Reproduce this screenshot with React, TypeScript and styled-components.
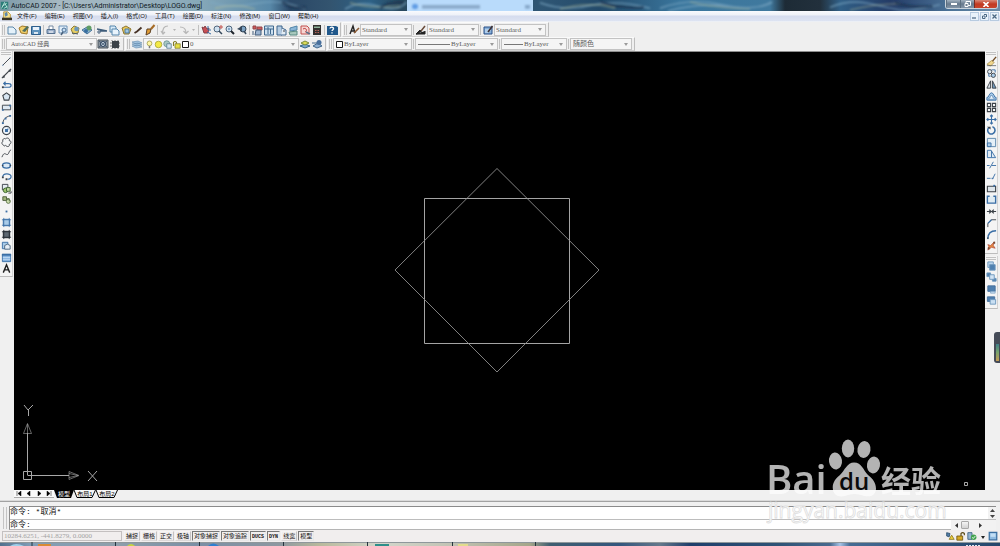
import React from "react";
import styled, { createGlobalStyle } from "styled-components";

const sans = '"Liberation Sans", "Noto Sans CJK SC", sans-serif';
const serif = '"Liberation Serif", "Noto Sans CJK SC", serif';
const mono = '"Liberation Mono", "Noto Sans CJK SC", monospace';

const GlobalStyle = createGlobalStyle`
  * { box-sizing: border-box; }
  body { margin: 0; background: #f0f0f0; font-family: ${sans}; font-size: 6px; color: #111; }
  button, select, input { font: inherit; color: inherit; margin: 0; padding: 0; border: 0; background: none; border-radius: 0; }
  svg { display: block; flex: none; }
`;

const Shell = styled.div`
  position: relative;
  display: flex;
  flex-direction: column;
  min-height: 100vh;
  overflow: hidden;
`;

/* ---------- title bar ---------- */
const TitleBar = styled.header`
  position: relative;
  display: flex;
  align-items: center;
  height: 11px;
  gap: 2px;
  overflow: hidden;
  background: #31597c;
`;
const Backdrop = styled.svg`
  position: absolute;
  inset: 0;
  width: 100%;
  height: 100%;
`;
const TitleText = styled.h1`
  position: relative;
  flex: 1;
  margin: 0;
  font-family: Roboto, "Noto Sans CJK SC", sans-serif;
  font-size: 7px;
  line-height: 10px;
  font-weight: 400;
  color: #10181e;
`;
const TitleIcon = styled.span`
  position: relative;
`;
const WindowButtons = styled.div`
  position: relative;
  align-self: flex-start;
  display: flex;
  height: 9px;
  margin-right: 2px;
  border: 1px solid #c9d3dc;
  border-top: 0;
  border-radius: 0 0 3px 3px;
  overflow: hidden;
`;
const WindowButton = styled.button<{ $close?: boolean }>`
  display: grid;
  place-items: center;
  width: ${(p) => (p.$close ? 23 : 14)}px;
  border-left: 1px solid ${(p) => (p.$close ? "#7a2c20" : "#5d6f80")};
  background: ${(p) =>
    p.$close
      ? "linear-gradient(#d98a78, #c23a22 50%, #c9452b)"
      : "linear-gradient(#a3b2c0, #66798d 50%, #8596a8)"};
`;

/* ---------- menu ---------- */
const MenuBar = styled.nav`
  display: flex;
  align-items: center;
  height: 11px;
  padding: 0 1px 0 2px;
  background: linear-gradient(#f8fafd, #eef1f8 40%, #d5dcee 50%, #dde3f2);
  border-bottom: 1px solid #eceff5;
`;
const MenuList = styled.div`
  display: flex;
  flex: 1;
  gap: 8px;
  margin-left: 5px;
`;
const MenuItem = styled.button`
  font-size: 6px;
  line-height: 9px;
  white-space: nowrap;
`;
const MdiButtons = styled.div`
  display: flex;
  gap: 1px;
`;
const MdiButton = styled.button`
  display: grid;
  place-items: center;
  width: 9px;
  height: 9px;
  border: 1px solid #b8cbe0;
  background: #e8f1fa;
`;

/* ---------- toolbars ---------- */
const ToolbarRow = styled.div<{ $h: number }>`
  display: flex;
  gap: 1px;
  height: ${(p) => p.$h}px;
  background: #efefef;
`;
const Toolbar = styled.div`
  display: flex;
  align-items: center;
  padding-right: 2px;
  border: 1px solid #fafafa;
  border-right-color: #bdbdbd;
  border-bottom-color: #cfcfcf;
`;
const Grip = styled.span`
  width: 3px;
  height: 10px;
  margin: 0 1px;
  border: 1px solid #c2c2c2;
  border-width: 0 1px;
`;
const ToolButton = styled.button<{ $narrow?: boolean }>`
  display: grid;
  place-items: center;
  width: ${(p) => (p.$narrow ? 7 : 12)}px;
  height: 12px;
`;
const Separator = styled.span`
  width: 1px;
  height: 10px;
  margin: 0 1px;
  background: #c0c0c0;
`;
const Combo = styled.span<{ $w: number; $size?: number; $inset?: number }>`
  display: flex;
  align-items: center;
  width: ${(p) => p.$w}px;
  height: 12px;
  padding: 0 3px 0 ${(p) => p.$inset ?? 1}px;
  border: 1px solid #c3c3c3;
  background: #f5f5f5;
  font-family: ${serif};
  font-size: ${(p) => p.$size ?? 7}px;
  color: #5c5c5c;
`;
const Select = styled.select`
  flex: 1;
  min-width: 0;
  height: 10px;
  line-height: 10px;
  appearance: none;
  outline: 0;
`;

/* ---------- workspace ---------- */
const Workspace = styled.main`
  display: flex;
  flex: 1;
`;
const SideColumn = styled.aside<{ $w: number }>`
  display: flex;
  flex-direction: column;
  gap: 2px;
  flex: none;
  width: ${(p) => p.$w}px;
  background: #f0f0f0;
`;
const SideBar = styled.div`
  display: flex;
  flex-direction: column;
  align-items: center;
  width: 13px;
  padding-bottom: 2px;
  border-right: 1px solid #d2d2d2;
  border-bottom: 1px solid #bcbcbc;
  background: #f4f4f4;
`;
const SideGrip = styled.span`
  width: 10px;
  height: 3px;
  margin: 1px 0;
  border: 1px solid #c2c2c2;
  border-width: 1px 0;
`;
const SideTools = styled.div<{ $h: number }>`
  display: flex;
  flex-direction: column;
  justify-content: space-between;
  height: ${(p) => p.$h}px;
`;
const SideTool = styled.button`
  display: grid;
  place-items: center;
  width: 11px;
  height: 11px;
`;
const Canvas = styled.section`
  display: grid;
  flex: 1;
  min-width: 0;
  background: #000;
  border-top: 1px solid #8d8d8d;
  > svg { grid-area: 1 / 1; }
`;
const Drawing = styled.svg`
  place-self: center;
`;
const UcsIcon = styled.svg`
  place-self: end start;
`;
const CornerMark = styled.svg`
  place-self: end;
`;
const EdgeWidget = styled.span`
  position: absolute;
  right: 0;
  top: 332px;
  width: 6px;
  height: 31px;
  padding: 12px 1px 2px 2px;
  border-radius: 3px 0 0 3px;
  background: #454b57;
`;
const EdgeMeter = styled.span`
  display: block;
  height: 100%;
  background: linear-gradient(#3f7f88, #79a36c 50%, #c49a55);
`;

/* ---------- layout tabs ---------- */
const TabRow = styled.div`
  display: flex;
  align-items: flex-start;
  height: 11px;
  padding-left: 14px;
  background: #f0f0f0;
  border-bottom: 1px solid #dadada;
`;
const TabNav = styled.div`
  display: flex;
  width: 40px;
  height: 8px;
  background: #fafafa;
  border-bottom: 1px solid #aaa;
`;
const TabNavButton = styled.button`
  display: grid;
  place-items: center;
  flex: 1;
`;
const Tab = styled.button<{ $active?: boolean; $w: number }>`
  position: relative;
  display: grid;
  place-items: center;
  width: ${(p) => p.$w}px;
  height: 8px;
  line-height: 7px;
  color: ${(p) => (p.$active ? "#fff" : "#000")};
  > svg { position: absolute; inset: 0; width: 100%; height: 100%; }
  > span { position: relative; }
`;

/* ---------- command line ---------- */
const CommandPanel = styled.section`
  display: flex;
  height: 29px;
  padding: 4px 4px 0 2px;
  border-top: 1px solid #a2a2a2;
  background: #f0f0f0;
`;
const CommandGrip = styled.span`
  width: 4px;
  margin: 1px 2px 1px 1px;
  border: 1px solid #c4c4c4;
  border-width: 0 1px;
`;
const CommandBody = styled.div`
  flex: 1;
  border: 1px solid #8b8b8b;
  border-right: 0;
  border-bottom-color: #b5b5b5;
  background: #fff;
  font-family: ${mono};
  font-size: 8px;
  line-height: 10px;
`;
const CommandLine = styled.div`
  display: flex;
  height: 13px;
  border-bottom: 1px solid #bdbdbd;
`;
const CommandPrompt = styled.label`
  display: flex;
  height: 10px;
`;
const CommandInput = styled.input`
  flex: 1;
  min-width: 0;
  height: 10px;
  outline: 0;
`;
const ScrollV = styled.span`
  display: flex;
  flex-direction: column;
  justify-content: space-around;
  align-items: center;
  width: 8px;
  margin-left: auto;
  background: #f2f2f2;
`;
const ScrollH = styled.span`
  display: flex;
  align-items: center;
  justify-content: space-between;
  width: 45px;
  padding: 0 14px 0 4px;
  background: #f2f2f2;
`;
const ScrollThumb = styled.span`
  width: 8px;
  height: 8px;
  margin-right: 8px;
  border: 1px solid #a8a8a8;
  border-radius: 1px;
  background: linear-gradient(#f4f4f4, #d2d2d2);
`;

/* ---------- status bar ---------- */
const StatusBar = styled.footer`
  display: flex;
  align-items: center;
  height: 12px;
  padding: 0 2px;
  background: #f1eeee;
`;
const Coordinates = styled.output`
  width: 120px;
  height: 10px;
  margin-right: 2px;
  padding-left: 1px;
  border: 1px solid #c4c0c0;
  font-family: ${serif};
  font-size: 7px;
  line-height: 8px;
  white-space: nowrap;
  color: #a2a2a2;
`;
const StatusToggles = styled.div`
  display: flex;
  gap: 1px;
  flex: 1;
`;
const StatusToggle = styled.button<{ $on?: boolean }>`
  height: 10px;
  padding: 0 1px;
  border: 1px solid ${(p) => (p.$on ? "#777" : "#f6f4f4")};
  border-right-color: ${(p) => (p.$on ? "#e8e8e8" : "#c6c2c2")};
  border-bottom-color: ${(p) => (p.$on ? "#e8e8e8" : "#dcd8d8")};
  font-size: 6px;
  line-height: 8px;
  white-space: nowrap;
`;
const LatinLabel = styled.span`
  font-family: ${mono};
  font-size: 5px;
  font-weight: 700;
`;
const Tray = styled.div`
  display: flex;
  align-items: center;
  gap: 1px;
`;
const Taskbar = styled.div`
  height: 4px;
  > svg { width: 100%; height: 100%; }
`;

const Watermark = styled.svg`
  position: absolute;
  right: 52px;
  bottom: 18px;
  pointer-events: none;
`;

/* ---------- icons ---------- */
const B = "#3a6ea5";
const K = "#3c4248";
const L = "#a9cbe8";

const icons: Record<string, React.ReactNode> = {
  new: <path d="M2 3h5l3 3v4H2z" fill="#e4f1fa" stroke="#5b86a8" />,
  open: <><path d="M1 4l3-2 6 1-1 7-6-1z" fill="#f1cf6b" stroke="#a07a28" /><path d="M4 7l5-5 2 1-4 5z" fill="#4f6f5f" /></>,
  save: <><path d="M1.500 2.500h9v8h-9z" fill="#5f93bd" stroke="#2e5f8c" /><path d="M3 3h6v3H3z" fill="#e8f2fb" /><path d="M4 8h4v2H4z" fill="#dce8f2" /></>,
  print: <><path d="M4 5V2h4v3" fill="#fff" stroke="#7588a0" /><path d="M2 5.500h8v4H2z" fill="#9fb2cc" stroke="#55708e" /><path d="M4 8h4" stroke="#fff" /></>,
  preview: <><path d="M2 2h8v7H2z" fill="#e2effa" stroke="#6a90b5" /><circle cx="7" cy="6" r="2" fill="#c7def2" stroke="#4b6f95" /><path d="M6 8l-2 3" stroke="#49617c" strokeWidth="1.500" /></>,
  publish: <><path d="M2 5l3-3 5 2-1 5-5 1z" fill="#e8cf62" stroke="#8e7d36" /><circle cx="7.500" cy="5" r="2.300" fill="#6a98bd" /><path d="M3 9l6 1" stroke="#4c5b68" /></>,
  web: <><path d="M1 6l5-3 5 3-5 4z" fill="#8fb5d3" stroke="#47749a" /><circle cx="8" cy="4" r="2.500" fill="#5e9c64" /><circle cx="5" cy="7" r="2" fill="#386e9f" /></>,
  cut: <><path d="M1 5l10 2M4 7h7" stroke="#3e5c7a" strokeWidth="1.300" /><circle cx="3" cy="8" r="1.200" fill="none" stroke="#3e5c7a" /></>,
  copy: <><path d="M2 2h5l1 1v5H2z" fill="#d9ebf8" stroke="#5585ab" /><path d="M4 5h5l2 2v4H4z" fill="#e9f4fc" stroke="#5585ab" /></>,
  paste: <><path d="M2 4l4-2 5 3-2 5-5 0z" fill="#ecc957" stroke="#8c7633" /><path d="M5 5h4v4H5z" fill="#9ec6e3" stroke="#4c7ba2" /></>,
  match: <path d="M9.500 3.500L5 7.500 2.500 9" stroke="#473225" strokeWidth="1.800" />,
  brush: <><path d="M10.500 1L7 5" stroke="#a66b25" strokeWidth="2" /><path d="M3 5l4 0-1 4-4 2z" fill="#df9b35" stroke="#5e4123" /></>,
  undo: <path d="M9 2C5 2 3 5 4 10M2 7l2 3 2-2" stroke="#b6b6b6" strokeWidth="1.200" />,
  redo: <path d="M2 3c4 0 6 2 6 6M5.500 7L8 9.500 10.500 7" stroke="#b6b6b6" strokeWidth="1.200" />,
  drop: <path d="M2 5h3L3.500 7z" fill="#b4b4b4" />,
  pan: <><path d="M2 3l2 1 1-2 2 3 2-1-1 5-4 0z" fill="#c94f54" stroke="#843e44" /><path d="M8 2v4h3M7 8l4 2" stroke={B} /></>,
  zoom: <><circle cx="5" cy="5" r="3" fill="#cfe1f0" stroke="#51677d" /><path d="M7 7l3 3" stroke="#34475a" strokeWidth="1.500" /><path d="M9 1v4M7 3h4" stroke="#c25551" /></>,
  zoomWin: <><circle cx="5" cy="5" r="3" fill="#cfe1f0" stroke="#51677d" /><path d="M4 5h2" stroke={B} /><path d="M7 7l3 3" stroke="#1e242b" strokeWidth="2" /></>,
  zoomPrev: <><circle cx="7" cy="5" r="3" fill="#7ea3c4" stroke="#2f4254" /><path d="M8 7l2 3" stroke="#34475a" strokeWidth="1.500" /><path d="M1 5l5-3v5z" fill="#394a5c" /></>,
  properties: <><path d="M2 2h3v3H2zM6 3h5v3H6z" fill="#cf5a58" stroke="#92444a" /><path d="M2 7v4M5 6h5v5H4z" fill="#9bb3cf" stroke="#435c7b" /></>,
  center: <><path d="M1.500 2h9v9h-9z" fill="#cce0f0" stroke="#41698e" /><path d="M2 5h8M5 3v7M7.500 5v5" stroke="#41698e" /></>,
  palettes: <><path d="M2 2h5v9H2z" fill="#b4cce3" stroke="#3c648c" /><path d="M7 4l4 2v5H6" fill="#e3edf5" stroke="#3c648c" /><path d="M8 7h2" stroke={K} /></>,
  sheet: <><path d="M3 4l7-2v4l-7 1z" fill="#8ab7d8" stroke="#5285a9" /><path d="M2 8l8-1v4l-7 0z" fill="#a8c8bd" stroke="#598a82" /></>,
  markup: <><path d="M2 2h6l2 2v6H2z" fill="#f5d5d3" stroke="#c2504f" /><path d="M4 5c3-2 5 2 2 3" stroke="#bd3c3c" /><path d="M7 8l4 2" stroke="#5d6d85" strokeWidth="1.500" /></>,
  calc: <><path d="M2 1h8v10H2z" fill="#33302f" /><path d="M3 2.500h6V4H3z" fill="#8fb39b" /><path d="M4 6.500h4M4 8.500h4" stroke="#b66459" strokeDasharray="1 .5" /></>,
  help: <><path d="M1 2h9l2 1v8H1z" fill="#20588b" /><path d="M4 4.500C4 2.500 8 3 7.500 5 7 6 6 6 6 7M6 8.200v1.300" stroke="#fff" strokeWidth="1.300" /></>,
  textStyle: <><path d="M2 10l3-8 2 7M3 7h3" stroke="#242424" strokeWidth="1.400" /><path d="M11 4L6 9" stroke="#8b5b35" strokeWidth="1.600" /></>,
  dimStyle: <><path d="M10 2L6 7" stroke="#694a38" strokeWidth="1.500" /><path d="M1 10h9V7M1 10l4-4 2 3z" fill="#222" stroke="#222" /></>,
  tableStyle: <><path d="M2 3h8v7H2z" fill="#87b0da" stroke="#284f86" /><path d="M3 6h6M3 8h4" stroke="#dcecfb" /><path d="M10.500 2L6 8" stroke="#3c3032" strokeWidth="1.500" /></>,
  gear: <><path d="M1 2h10v8H1z" fill="#88929c" stroke="#4c565f" /><circle cx="6" cy="6" r="2.500" fill="#d2dfe9" stroke="#28405c" /><path d="M2 3l8 6M10 3L2 9" stroke="#28405c" strokeWidth=".7" /></>,
  workspace: <><path d="M3 3h7v7H3z" fill="#3c4248" /><path d="M3 2v1M6 2v1M9 2v1M3 10v1M6 10v1M9 10v1M1 5h2M10 5h1M1 8h2M10 8h1" stroke="#777" /></>,
  layers: <path d="M1 4l6-1 4 2-6 1zM1 6l6-1 4 2-6 1zM1 8l6-1 4 2-6 1z" fill="#a9c9e4" stroke="#5c86ab" strokeWidth=".6" />,
  bulb: <><circle cx="6" cy="4.500" r="3.200" fill="#fff6a4" stroke="#9b9540" /><path d="M5 8h2v3H5z" fill="#777" /></>,
  sun: <circle cx="6" cy="6" r="4.400" fill="#f3e945" stroke="#a39d2e" />,
  freeze: <><circle cx="5" cy="5" r="4" fill="#a8c8c3" stroke="#638a8b" /><path d="M5 5h6v6H5z" fill="#d3e3ef" stroke="#54788e" /></>,
  lock: <><path d="M2 8V3q2-2 4 0v2" stroke="#837c27" strokeWidth="1.400" /><path d="M4 5h7v6H4z" fill="#e6de43" stroke="#7d7829" /></>,
  swatch: <path d="M2 2h8v8H2z" fill="#fff" stroke="#111" strokeWidth="1.300" />,
  layerPrev: <><path d="M1 8l5-2 5 2-5 2z" fill="#79a7cf" stroke="#356489" /><path d="M2 5l4-2 4 2-4 2z" fill="#dcdb59" stroke="#7a8b3b" /></>,
  layerState: <><path d="M2 8l5-3 4 3-5 2z" fill="#8badd0" stroke="#42688d" /><circle cx="8" cy="4.500" r="2.500" fill="#486f9c" /><path d="M1 5h5" stroke="#42688d" /></>,
  line: <><path d="M2 10L10 2" stroke={K} /><path d="M1.500 9.500h1v1h-1zM9.500 1.500h1v1h-1z" fill={B} /></>,
  xline: <><path d="M1 11L11 1" stroke={K} strokeWidth="1.300" /><path d="M2 8.500h2v2H2zM8.500 2h2v2h-2z" fill={K} /></>,
  pline: <><path d="M2 9h6q3 0 3-2t-3-2H4M5 3L3 5l2 2" stroke={B} strokeWidth="1.300" /><path d="M1 8h2v2H1z" fill={K} /></>,
  polygon: <path d="M6 2l4 3-1.500 5h-5L2 5z" fill="#d8e6f2" stroke={K} strokeWidth="1.200" />,
  rect: <><path d="M1.500 3.500h9v5h-9z" fill="#dfe9f2" stroke={K} /><path d="M1 8h2v1.500H1zM9 3h2v2H9z" fill={B} /></>,
  arc: <><path d="M2 11C2 6 5 3 10 2" stroke={K} /><path d="M1 9h2v2H1zM4 4h2v2H4zM9 1h2v2H9z" fill={B} /></>,
  circle: <><circle cx="6" cy="6" r="4.400" fill="#edf4fa" stroke={K} strokeWidth="1.300" /><path d="M5 7l3-3M5 5h2v2H5z" stroke={B} strokeWidth="1.200" /></>,
  cloud: <path d="M3 9C0 8 1 5 2 5 1 2 4 1 5 2c2-2 5 0 4 2 3 0 2 4 0 4 1 3-3 3-4 1-1 1-2 1-2 0z" fill="#f4f6f7" stroke={K} />,
  spline: <path d="M1 10c2-5 3-4 5-3 3 1 2-4 5-5" stroke={K} />,
  ellipse: <><ellipse cx="6" cy="6" rx="4.300" ry="2.800" fill="#d9e8f5" stroke={B} strokeWidth="1.500" /><path d="M1 5.500h1.500v1H1zM9.500 5.500H11v1H9.500z" fill={K} /></>,
  ellipseArc: <><path d="M2 7c-1-5 9-5 9-1 0 2-2 3-4 3" stroke={B} strokeWidth="1.300" /><path d="M1 6h2v2H1zM5 8h2v2H5z" fill={K} /></>,
  insert: <><path d="M1.500 1.500h6v6h-6z" fill="#e5ecf2" stroke={K} /><circle cx="5" cy="8" r="2.500" fill="#9bc46c" stroke="#3d6232" /><path d="M6 5h4v4H6z" fill="#c4dda3" stroke="#3d6232" /><path d="M8 11h3V9" stroke={K} /></>,
  block: <><path d="M2 3h4v4H2z" fill="#a2b77f" stroke="#4c5b3a" /><circle cx="8" cy="8" r="2.200" fill="#d2e3b4" stroke="#577043" /><path d="M6 5h3v3" stroke="#577043" /></>,
  point: <path d="M5 5h2v2H5z" fill={B} />,
  hatch: <><path d="M2.500 2.500h7v7h-7z" fill={L} stroke={B} /><path d="M1 3h10M1 9h10M3 1v10M9 1v10" stroke={B} strokeWidth=".8" /></>,
  gradient: <><path d="M2.500 2.500h7v7h-7z" fill="#5e6872" stroke="#262c34" /><path d="M1 3h10M1 9h10M3 1v10M9 1v10" stroke="#262c34" strokeWidth=".9" /></>,
  region: <><path d="M1.500 2.500h6v7h-6z" fill={L} stroke={B} /><path d="M4 6q3-3 6 0v4H4z" fill="#e7eff7" stroke="#4a657d" /></>,
  table: <><path d="M1.500 2.500h9v8h-9z" fill="#86b3e0" stroke={B} /><path d="M1 2h10v2H1z" fill={B} /><path d="M2 6h8M2 8h8" stroke="#d5e8fa" strokeWidth=".7" /></>,
  mtext: <path d="M2.500 10.500L6 2l3.500 8.500M4 7.500h4" stroke="#1d1d1d" strokeWidth="1.500" />,
  erase: <><path d="M11 1L6 7" stroke="#6f4b25" strokeWidth="1.500" /><path d="M1 9l5-4 3 2-4 4z" fill="#f0d68e" stroke="#9c843d" strokeWidth=".7" /><path d="M1 10.500h10" stroke={K} strokeWidth=".7" /></>,
  copyObj: <><circle cx="4" cy="4" r="2.300" fill="#dfeaf3" stroke={K} /><circle cx="8" cy="8" r="2.300" fill={L} stroke={K} /><path d="M6 2h4v3M3 6v3h2" stroke={B} /></>,
  mirror: <><path d="M5 2v8H1z" fill="#dbe2e8" stroke={K} /><path d="M7 2v8h4z" fill="#6f98bd" stroke={K} /></>,
  offset: <><path d="M1 10V7q2 0 2-2 3-6 6 0 0 2 2 2v3z" fill={L} stroke={B} /><path d="M3 9V8q2 0 2-3h2q0 3 2 3v1z" fill="#edf5fb" stroke={B} strokeWidth=".6" /></>,
  array: <path d="M1.500 1.500h3.500v3.500H1.500zM7 1.500h3.500v3.500H7zM1.500 7h3.500v3.500H1.500zM7 7h3.500v3.500H7z" fill="#f5f6f7" stroke={K} strokeWidth="1.200" />,
  move: <path d="M6 1v10M1 6h10M4.500 2.500L6 1l1.500 1.500M4.500 9.500L6 11l1.500-1.500M2.500 4.500L1 6l1.500 1.500M9.500 4.500L11 6 9.500 7.500" stroke={B} strokeWidth="1.200" />,
  rotate: <><path d="M3 3a4 4 0 1 0 4-1" stroke={B} strokeWidth="1.700" /><path d="M1 2h4v3z" fill={K} /></>,
  scale: <><path d="M1.500 1.500h9v9h-9z" fill="#e5eff7" stroke="#5a86ac" /><path d="M1.500 6.500h4v4h-4z" fill={L} stroke={B} /></>,
  stretch: <><path d="M1.500 2.500h4l5 8h-9z" fill="#dfeaf4" stroke={B} /><path d="M6 3v7" stroke={B} /></>,
  trim: <path d="M1 6h3M6 6h5M4 9l4-7" stroke={B} />,
  extend: <path d="M1 8h4M6 8h2M7 9l3-6" stroke={B} />,
  breakPt: <><path d="M1.500 3.500h9v6h-9z" fill="#dfe6eb" stroke={K} strokeWidth="1.200" /><path d="M8 2h2v2H8z" fill={B} /></>,
  breakObj: <path d="M4 2.500H1.500v7.500h9V2.500H8" fill="#e0ecf4" stroke={B} strokeWidth="1.500" />,
  join: <path d="M1 6h4M7 6h4M3.500 4L5.500 6 3.500 8M8.500 4L6.500 6l2 2" stroke={K} strokeWidth="1.300" />,
  chamfer: <><path d="M2 11V7l4-4h5" stroke={K} /><path d="M2 7l4-4" stroke={B} strokeWidth="1.400" /></>,
  fillet: <><path d="M2 11C2 5 5 2 11 2" stroke={B} strokeWidth="1.700" /><path d="M2 11v-2" stroke={K} /></>,
  explode: <><path d="M2 5l3 1 4-4-1 4 2 3-4-1-4 3 1-4z" fill="#e28643" stroke="#ae4635" strokeWidth=".7" /><path d="M8 2h2v2H8zM2 8h2v2H2z" fill="#7a4b35" /></>,
  front: <><path d="M2 1h6v6H2z" fill="#b9d4ec" stroke="#6f98bd" /><path d="M4 4h6v6H4z" fill="#4f80b0" stroke="#6f98bd" /></>,
  back: <><path d="M1 1h4v4H1zM7 7h4v3H7z" fill="#4f80b0" stroke="#6f98bd" /><path d="M4 3h5v5H4z" fill="#d3e5f5" stroke="#6f98bd" /></>,
  above: <><path d="M2 2h8v6H2z" fill="#4f80b0" stroke="#456f9a" /><path d="M5 8h5v2H5z" fill="#c9dff2" stroke="#6f98bd" strokeWidth=".7" /></>,
  under: <><path d="M1.500 2h8v5h-8z" fill="#4f80b0" stroke="#456f9a" /><path d="M4.500 5h6v5h-6z" fill="#c9dff2" stroke="#6f98bd" /></>,
  file: <><path d="M2 1h5l3 3v5H2z" fill="#f6e08b" stroke="#b38f35" /><path d="M0 8h12v3H0z" fill="#3a3526" /><path d="M3 3l3-2 1 4-3 2z" fill="#5c88ae" /></>,
  app: <><path d="M1 1h10v10H1z" fill="#2c7e79" /><path d="M2 10L6 2l4 8M3 7l6-4M5 10l5-3" stroke="#c9f0e7" /></>,
  comm: <><path d="M2 2l4 1-1 4-3-1z" fill="#527da6" stroke="#2c4d6c" /><path d="M5 10l3-5 3 5H5z" fill="#f1d23d" stroke="#8b771e" /></>,
  unlock: <><path d="M6 6V3q2-2 4 0v2" stroke="#5c4a13" strokeWidth="1.400" /><path d="M1 6h7v5H1z" fill="#d8aa25" stroke="#6d5312" /></>,
  standards: <><path d="M1 2h5v8H1z" fill="#96b5cf" stroke="#375b7e" /><circle cx="8" cy="7.500" r="3.300" fill="#43a34e" /><path d="M6.500 7.500l1 1.500L10 6" stroke="#fff" /></>,
  clean: <><path d="M1.500 1.500h9v9h-9z" fill="#8fbbe2" stroke="#3c6fa1" strokeWidth="1.500" /><path d="M3 3h6v4H3z" fill="#c3def5" /></>,
};

function Icon({ name, size = 12, width }: { name: string; size?: number; width?: number }) {
  return (
    <svg width={width ?? size} height={size} viewBox={`0 0 ${width ? 7 : 12} 12`} fill="none" aria-hidden="true">
      {icons[name]}
    </svg>
  );
}

function Tools({ names }: { names: string[] }) {
  return (
    <>
      {names.map((n, i) =>
        n === "|" ? (
          <Separator key={i} />
        ) : n === "drop" ? (
          <ToolButton key={i} $narrow aria-label="history">
            <Icon name="drop" size={12} width={7} />
          </ToolButton>
        ) : (
          <ToolButton key={i} aria-label={n}>
            <Icon name={n} size={12} />
          </ToolButton>
        )
      )}
    </>
  );
}

interface PickerProps {
  label: string;
  value: string;
  w: number;
  size?: number;
  inset?: number;
  children?: React.ReactNode;
}

function Picker({ label, value, w, size, inset, children }: PickerProps) {
  return (
    <Combo $w={w} $size={size} $inset={inset}>
      {children}
      <Select aria-label={label} defaultValue={value}>
        <option>{value}</option>
      </Select>
      <svg width="4" height="3" viewBox="0 0 4 3" aria-hidden="true">
        <path d="M0 0h4L2 3z" fill="#9a9a9a" />
      </svg>
    </Combo>
  );
}

function LineSample({ w }: { w: number }) {
  return (
    <svg width={w} height="3" aria-hidden="true">
      <path d={`M1 1.500H${w - 1}`} stroke="#777" />
    </svg>
  );
}

function ToolColumn({ names, h }: { names: string[]; h: number }) {
  return (
    <SideBar>
      <SideGrip />
      <SideTools $h={h}>
        {names.map((n) => (
          <SideTool key={n} aria-label={n}>
            <Icon name={n} size={11} />
          </SideTool>
        ))}
      </SideTools>
    </SideBar>
  );
}

const menus = ["文件(F)", "编辑(E)", "视图(V)", "插入(I)", "格式(O)", "工具(T)", "绘图(D)", "标注(N)", "修改(M)", "窗口(W)", "帮助(H)"];

const standardTools = ["new", "open", "save", "|", "print", "preview", "publish", "web", "|", "cut", "copy", "paste", "match", "brush", "|", "undo", "drop", "redo", "drop", "|", "pan", "zoom", "zoomWin", "zoomPrev", "|", "properties", "center", "palettes", "sheet", "markup", "calc", "|", "help"];

const drawTools = ["line", "xline", "pline", "polygon", "rect", "arc", "circle", "cloud", "spline", "ellipse", "ellipseArc", "insert", "block", "point", "hatch", "gradient", "region", "table", "mtext"];

const modifyTools = ["erase", "copyObj", "mirror", "offset", "array", "move", "rotate", "scale", "stretch", "trim", "extend", "breakPt", "breakObj", "join", "chamfer", "fillet", "explode"];

const orderTools = ["front", "back", "above", "under"];

const toggles: { text: string; on?: boolean; latin?: boolean }[] = [
  { text: "捕捉" },
  { text: "栅格" },
  { text: "正交" },
  { text: "极轴" },
  { text: "对象捕捉", on: true },
  { text: "对象追踪", on: true },
  { text: "DUCS", on: true, latin: true },
  { text: "DYN", on: true, latin: true },
  { text: "线宽" },
  { text: "模型", on: true },
];

const navArrows = ["M1 0v5M5 0v5L2 2.500z", "M4 0v5L1 2.500z", "M2 0v5L5 2.500z", "M5 0v5M1 0v5L4 2.500z"];

function TitleBackdrop() {
  return (
    <Backdrop viewBox="0 0 1000 12" preserveAspectRatio="none" aria-hidden="true">
      <defs>
        <linearGradient id="sky">
          <stop offset="0" stopColor="#7d9aa8" />
          <stop offset=".06" stopColor="#a6b9c2" />
          <stop offset=".13" stopColor="#9cb3bf" />
          <stop offset=".2" stopColor="#86a8b8" />
          <stop offset=".27" stopColor="#5888a8" />
          <stop offset=".29" stopColor="#2a4766" />
          <stop offset=".33" stopColor="#33546f" />
          <stop offset=".37" stopColor="#2d6186" />
          <stop offset=".4" stopColor="#28485e" />
          <stop offset=".54" stopColor="#2f5674" />
          <stop offset=".6" stopColor="#234a6a" />
          <stop offset=".68" stopColor="#3a769d" />
          <stop offset=".77" stopColor="#40799e" />
          <stop offset=".785" stopColor="#1d2b36" />
          <stop offset=".82" stopColor="#22303c" />
          <stop offset=".84" stopColor="#316087" />
          <stop offset=".89" stopColor="#233b66" />
          <stop offset=".95" stopColor="#4b7297" />
          <stop offset="1" stopColor="#6c8ba6" />
        </linearGradient>
        <filter id="soft" x="-5%" y="-50%" width="110%" height="200%">
          <feGaussianBlur stdDeviation="1" />
        </filter>
      </defs>
      <path d="M0 0h1000v12H0z" fill="url(#sky)" />
      <g filter="url(#soft)" fill="none" strokeWidth="1.500">
        <path d="M210 2q20 8 45 2t50 6M345 10q15-10 34-3t28-5M540 3q25 10 50 3t60 3M660 9q30-12 62-4t50-3M668 12q30-9 60-5t44-4M830 8q20-9 40-4t30 7 40-6" stroke="#7fa9c4" opacity=".7" />
        <path d="M215 9q20-6 40 1M350 3q20 7 50 4M560 10q30-9 55-1M690 2q20 6 60 8M850 11q20-6 50-7" stroke="#bfc596" opacity=".45" />
        <path d="M282 2q10 8 24 6M380 9q10-8 24-6M600 2q20 8 44 6M895 3q15 6 38 4" stroke="#142b49" strokeWidth="3" opacity=".6" />
      </g>
      <path d="M407 0h126v12H407z" fill="#b9dbfb" />
      <g filter="url(#soft)">
        <circle cx="415" cy="7" r="3" fill="#5e9be4" />
        <path d="M422 5.500h58v4h-58z" fill="#7896b5" opacity=".7" />
        <path d="M525 5.500h5v4h-5z" fill="#6f90b4" opacity=".7" />
      </g>
    </Backdrop>
  );
}

export default function App() {
  return (
    <Shell>
      <GlobalStyle />
      <TitleBar>
        <TitleBackdrop />
        <TitleIcon><Icon name="app" size={9} /></TitleIcon>
        <TitleText>AutoCAD 2007 - [C:\Users\Administrator\Desktop\LOGO.dwg]</TitleText>
        <WindowButtons>
          <WindowButton aria-label="Minimize">
            <svg width="6" height="3"><path d="M0 0h6v2H0z" fill="#fff" /></svg>
          </WindowButton>
          <WindowButton aria-label="Restore">
            <svg width="7" height="6" fill="none"><path d="M2 .5h4.500v4H2z" stroke="#fff" /><path d="M1 2.500h3v3H1z" fill="#6d7f90" stroke="#fff" /></svg>
          </WindowButton>
          <WindowButton $close aria-label="Close">
            <svg width="6" height="5"><path d="M.5 0l5 5M5.500 0l-5 5" stroke="#fff" strokeWidth="1.600" /></svg>
          </WindowButton>
        </WindowButtons>
      </TitleBar>

      <MenuBar>
        <Icon name="file" size={10} />
        <MenuList>
          {menus.map((m) => <MenuItem key={m}>{m}</MenuItem>)}
        </MenuList>
        <MdiButtons>
          <MdiButton aria-label="Minimize drawing"><svg width="5" height="5"><path d="M0 4h4" stroke="#4a6782" strokeWidth="1.200" /></svg></MdiButton>
          <MdiButton aria-label="Restore drawing"><svg width="5" height="5" fill="none"><path d="M2 .5h2.500V3M.5 2h2.500v2.500H.5z" stroke="#4a6782" /></svg></MdiButton>
          <MdiButton aria-label="Close drawing"><svg width="5" height="5"><path d="M.5 .5l4 4M4.500 .5l-4 4" stroke="#4a6782" strokeWidth="1.200" /></svg></MdiButton>
        </MdiButtons>
      </MenuBar>

      <ToolbarRow $h={15}>
        <Toolbar>
          <Grip />
          <Tools names={standardTools} />
        </Toolbar>
        <Toolbar>
          <Grip />
          <Tools names={["textStyle"]} />
          <Picker label="Text style" value="Standard" w={52} />
          <Separator />
          <Tools names={["dimStyle"]} />
          <Picker label="Dimension style" value="Standard" w={52} />
          <Separator />
          <Tools names={["tableStyle"]} />
          <Picker label="Table style" value="Standard" w={52} />
        </Toolbar>
      </ToolbarRow>
      <ToolbarRow $h={14}>
        <Toolbar>
          <Grip />
          <Picker label="Workspace" value="AutoCAD 经典" w={91} size={6} inset={4} />
          <Tools names={["gear", "workspace"]} />
        </Toolbar>
        <Toolbar>
          <Grip />
          <Tools names={["layers"]} />
          <Picker label="Layer" value="0" w={156}>
            <Icon name="bulb" size={9} />
            <Icon name="sun" size={9} />
            <Icon name="freeze" size={9} />
            <Icon name="lock" size={9} />
            <Icon name="swatch" size={9} />
          </Picker>
          <Tools names={["layerPrev", "layerState"]} />
        </Toolbar>
        <Toolbar>
          <Grip />
          <Picker label="Color" value="ByLayer" w={79}>
            <Icon name="swatch" size={9} />
          </Picker>
          <Separator />
          <Picker label="Linetype" value="ByLayer" w={83}>
            <LineSample w={34} />
          </Picker>
          <Separator />
          <Picker label="Lineweight" value="ByLayer" w={66}>
            <LineSample w={21} />
          </Picker>
          <Separator />
          <Picker label="Plot style" value="随颜色" w={62} inset={2} />
        </Toolbar>
      </ToolbarRow>

      <Workspace>
        <SideColumn $w={14}>
          <ToolColumn names={drawTools} h={218} />
        </SideColumn>
        <Canvas aria-label="Drawing area">
          <Drawing width="210" height="210" viewBox="0 0 210 210" fill="none">
            <path d="M29.500 32.500h145v145h-145z" stroke="#a4a4a4" />
            <path d="M102 2.500l102 101.500-102 102L0 104z" stroke="#8e8e8e" strokeWidth=".9" />
          </Drawing>
          <UcsIcon width="90" height="90" viewBox="0 0 90 90" fill="none" stroke="#a8a8a8">
            <path d="M10 5l4 5 5-5M14.500 10v6M74 71l9 10M83 71l-9 10" />
            <path d="M9.500 71.500h8v8h-8zM13.500 75.500V33M14 75.500h41" />
            <path d="M13.500 23.500l-4 10h8zM13.500 24v9M65 75.500l-10-4v8zM55 73.500l9 2-9 2" strokeWidth=".6" />
          </UcsIcon>
          <CornerMark width="24" height="12" fill="none">
            <path d="M3.500 4.500h3v3h-3z" stroke="#a8a8a8" />
          </CornerMark>
        </Canvas>
        <SideColumn $w={15}>
          <ToolColumn names={modifyTools} h={195} />
          <ToolColumn names={orderTools} h={45} />
        </SideColumn>
      </Workspace>
      <EdgeWidget><EdgeMeter /></EdgeWidget>

      <TabRow>
        <TabNav>
          {navArrows.map((d, i) => (
            <TabNavButton key={d} aria-label={["First", "Previous", "Next", "Last"][i]}>
              <svg width="6" height="5"><path d={d} fill="#000" stroke="#000" strokeWidth=".5" /></svg>
            </TabNavButton>
          ))}
        </TabNav>
        <Tab $active $w={20}>
          <svg viewBox="0 0 20 8" preserveAspectRatio="none" aria-hidden="true"><path d="M0 0h20l-3 8H3z" fill="#000" /></svg>
          <span>模型</span>
        </Tab>
        <Tab $w={22}>
          <svg viewBox="0 0 22 8" preserveAspectRatio="none" aria-hidden="true"><path d="M0 0l3 7.500h15L21.500 0" fill="#f6f6f6" stroke="#000" /></svg>
          <span>布局1</span>
        </Tab>
        <Tab $w={22}>
          <svg viewBox="0 0 22 8" preserveAspectRatio="none" aria-hidden="true"><path d="M0 0l3 7.500h15L21.500 0" fill="#f6f6f6" stroke="#000" /></svg>
          <span>布局2</span>
        </Tab>
      </TabRow>

      <CommandPanel>
        <CommandGrip />
        <CommandBody>
          <CommandLine>
            <span>命令: *取消*</span>
            <ScrollV>
              <svg width="5" height="3"><path d="M0 3h5L2.500 0z" fill="#444" /></svg>
              <svg width="5" height="3"><path d="M0 0h5L2.500 3z" fill="#444" /></svg>
            </ScrollV>
          </CommandLine>
          <CommandPrompt>
            <span>命令:</span>
            <CommandInput type="text" />
            <ScrollH>
              <svg width="3" height="5"><path d="M3 0v5L0 2.500z" fill="#333" /></svg>
              <ScrollThumb />
              <svg width="3" height="5"><path d="M0 0v5l3-2.500z" fill="#333" /></svg>
            </ScrollH>
          </CommandPrompt>
        </CommandBody>
      </CommandPanel>

      <StatusBar>
        <Coordinates>10284.6251, -441.8279, 0.0000</Coordinates>
        <StatusToggles>
          {toggles.map((t) => (
            <StatusToggle key={t.text} $on={t.on} aria-pressed={!!t.on}>
              {t.latin ? <LatinLabel>{t.text}</LatinLabel> : t.text}
            </StatusToggle>
          ))}
        </StatusToggles>
        <Tray>
          <Icon name="comm" size={10} />
          <Icon name="unlock" size={10} />
          <Icon name="standards" size={10} />
          <svg width="9" height="9"><path d="M3 4h4L5 7z" fill="#222" /></svg>
          <Icon name="clean" size={10} />
        </Tray>
      </StatusBar>

      <Taskbar>
        <svg viewBox="0 0 1000 4" preserveAspectRatio="none" aria-hidden="true">
          <defs>
            <linearGradient id="task">
              <stop offset="0" stopColor="#51708d" />
              <stop offset=".03" stopColor="#7f9cb5" />
              <stop offset=".11" stopColor="#8fa0ac" />
              <stop offset=".2" stopColor="#7b8fa5" />
              <stop offset=".28" stopColor="#8d98a0" />
              <stop offset=".32" stopColor="#b9b99c" />
              <stop offset=".38" stopColor="#d3d6cb" />
              <stop offset=".45" stopColor="#c2c3b4" />
              <stop offset=".53" stopColor="#a5a68a" />
              <stop offset=".55" stopColor="#3f5d70" />
              <stop offset=".62" stopColor="#34567d" />
              <stop offset=".66" stopColor="#65788b" />
              <stop offset=".69" stopColor="#1f3e6b" />
              <stop offset=".78" stopColor="#2f5376" />
              <stop offset=".83" stopColor="#48698e" />
              <stop offset=".84" stopColor="#a7c3e6" />
              <stop offset=".85" stopColor="#456b93" />
              <stop offset="1" stopColor="#24466b" />
            </linearGradient>
          </defs>
          <path d="M0 0h1000v4H0z" fill="url(#task)" />
          <path d="M0 .5h1000" stroke="#8f979b" />
          <path d="M32 0v4M115.500 0v4M199.500 0v4M283.500 0v4M367.500 0v4M452.500 0v4M535.500 0v4" stroke="#26343e" />
          <path d="M38 2h13v2H38z" fill="#d98a35" />
          <path d="M10 4q6-4 14 0z" fill="#9fd0ea" />
          <path d="M127 4q4-4 8 0z" fill="#c9d53f" />
          <path d="M208 4q5-5 11 0z" fill="#2f7fd0" />
          <path d="M375 2h14v2h-14z" fill="#2f8f8a" />
          <path d="M458 2h10v2h-10z" fill="#e2dc8c" />
          <path d="M966 3.500h14" stroke="#dfe8f1" strokeDasharray="2 1" />
        </svg>
      </Taskbar>

      <Watermark width="182" height="92" viewBox="0 0 182 92" aria-label="Baidu Jingyan">
        <g fill="#fff" opacity=".7" fontFamily='"Open Sans", "Noto Sans CJK SC", sans-serif' fontWeight="700">
          <text x="0" y="58" fontSize="40" fontWeight="600">Bai</text>
          <ellipse cx="69.500" cy="25" rx="6.500" ry="8.500" transform="rotate(-8 69.500 25)" />
          <ellipse cx="82" cy="12.500" rx="6.200" ry="9" />
          <ellipse cx="98" cy="13.500" rx="6.500" ry="8.500" transform="rotate(10 98 13.500)" />
          <ellipse cx="107.500" cy="29" rx="6.500" ry="8.500" transform="rotate(10 107.500 29)" />
          <path d="M88 26.500C81 26.500 79 34 74 39 68 44 66 48 67 54 69 62 77 61 82 59 86 57.500 91 57.500 95 59 101 61 109 62 110 53 110 47 107 43 102 39 97 34 96 26.500 88 26.500z" />
          <text x="115" y="56" fontSize="30">经验</text>
        </g>
        <text x="73" y="54" fontSize="24" fontWeight="600" fontFamily='"Open Sans", sans-serif' fill="#0a0a0a">du</text>
        <text x="2" y="82" fontSize="21" fontFamily='"Open Sans", sans-serif' fill="#fff" stroke="#dedede" strokeWidth=".8">jingyan.baidu.com</text>
      </Watermark>
    </Shell>
  );
}
